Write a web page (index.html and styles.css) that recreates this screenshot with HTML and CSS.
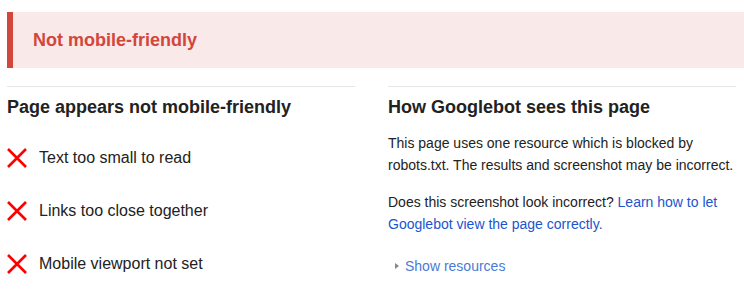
FILE: index.html
```html
<!DOCTYPE html>
<html>
<head>
    <title>Mobile-Friendly Test</title>
    <link rel="stylesheet" href="styles.css">
</head>
<body>
    <div class="banner">Not mobile-friendly</div>

    <div class="columns">
        <div class="column">
            <h2 class="heading">Page appears not mobile-friendly</h2>
            <ul class="issues">
                <li class="issue">
                    <svg class="cross" viewBox="0 0 20 20"><path d="M1 1L19 19M19 1L1 19"/></svg>
                    Text too small to read
                </li>
                <li class="issue">
                    <svg class="cross" viewBox="0 0 20 20"><path d="M1 1L19 19M19 1L1 19"/></svg>
                    Links too close together
                </li>
                <li class="issue">
                    <svg class="cross" viewBox="0 0 20 20"><path d="M1 1L19 19M19 1L1 19"/></svg>
                    Mobile viewport not set
                </li>
            </ul>
        </div>

        <div class="column">
            <h2 class="heading">How Googlebot sees this page</h2>
            <p class="text">This page uses one resource which is blocked by robots.txt. The results and screenshot may be incorrect.</p>
            <p class="text">Does this screenshot look incorrect? <a href="#" class="link">Learn how to let Googlebot view the page correctly.</a></p>
            <div class="toggle"><span class="arrow"></span><a href="#" class="toggle-link">Show resources</a></div>
        </div>
    </div>
</body>
</html>
```

FILE: styles.css
```css
body {
    margin: 0;
    padding: 12px 0 0 7px;
    font-family: 'Liberation Sans', Arial, sans-serif;
    color: #222;
    background: #fff;
}

.banner {
    height: 56px;
    display: flex;
    align-items: center;
    padding-left: 20px;
    background-color: #f9eae9;
    border-left: 6px solid #d3463b;
    color: #d3463b;
    font-size: 18px;
    font-weight: bold;
}

.columns {
    display: grid;
    grid-template-columns: 348px 348px;
    column-gap: 33px;
    margin-top: 18px;
}

.column {
    border-top: 1px solid #e6e6e6;
    padding-top: 9px;
}

.heading {
    margin: 0;
    font-size: 18px;
    line-height: 22px;
    font-weight: bold;
    color: #222;
}

.issues {
    list-style: none;
    margin: 0;
    padding: 0;
}

.issue {
    display: flex;
    align-items: center;
    height: 53px;
    font-size: 16px;
    color: #222;
}

.issue:first-child {
    margin-top: 13px;
}

.cross {
    width: 20px;
    height: 20px;
    margin-right: 12px;
    fill: none;
    stroke: #ff0000;
    stroke-width: 2.6;
}

.text {
    margin: 14px 0 0;
    font-size: 14px;
    line-height: 22px;
    color: #222;
}

.text + .text {
    margin-top: 15px;
}

.link {
    color: #1a55d0;
    text-decoration: none;
}

.toggle {
    margin-top: 23px;
    padding-left: 7px;
    display: flex;
    align-items: center;
    font-size: 14px;
}

.arrow {
    width: 0;
    height: 0;
    border-top: 3.5px solid transparent;
    border-bottom: 3.5px solid transparent;
    border-left: 4px solid #888;
    margin-right: 6px;
}

.toggle-link {
    color: #4a7ad6;
    text-decoration: none;
}
```
